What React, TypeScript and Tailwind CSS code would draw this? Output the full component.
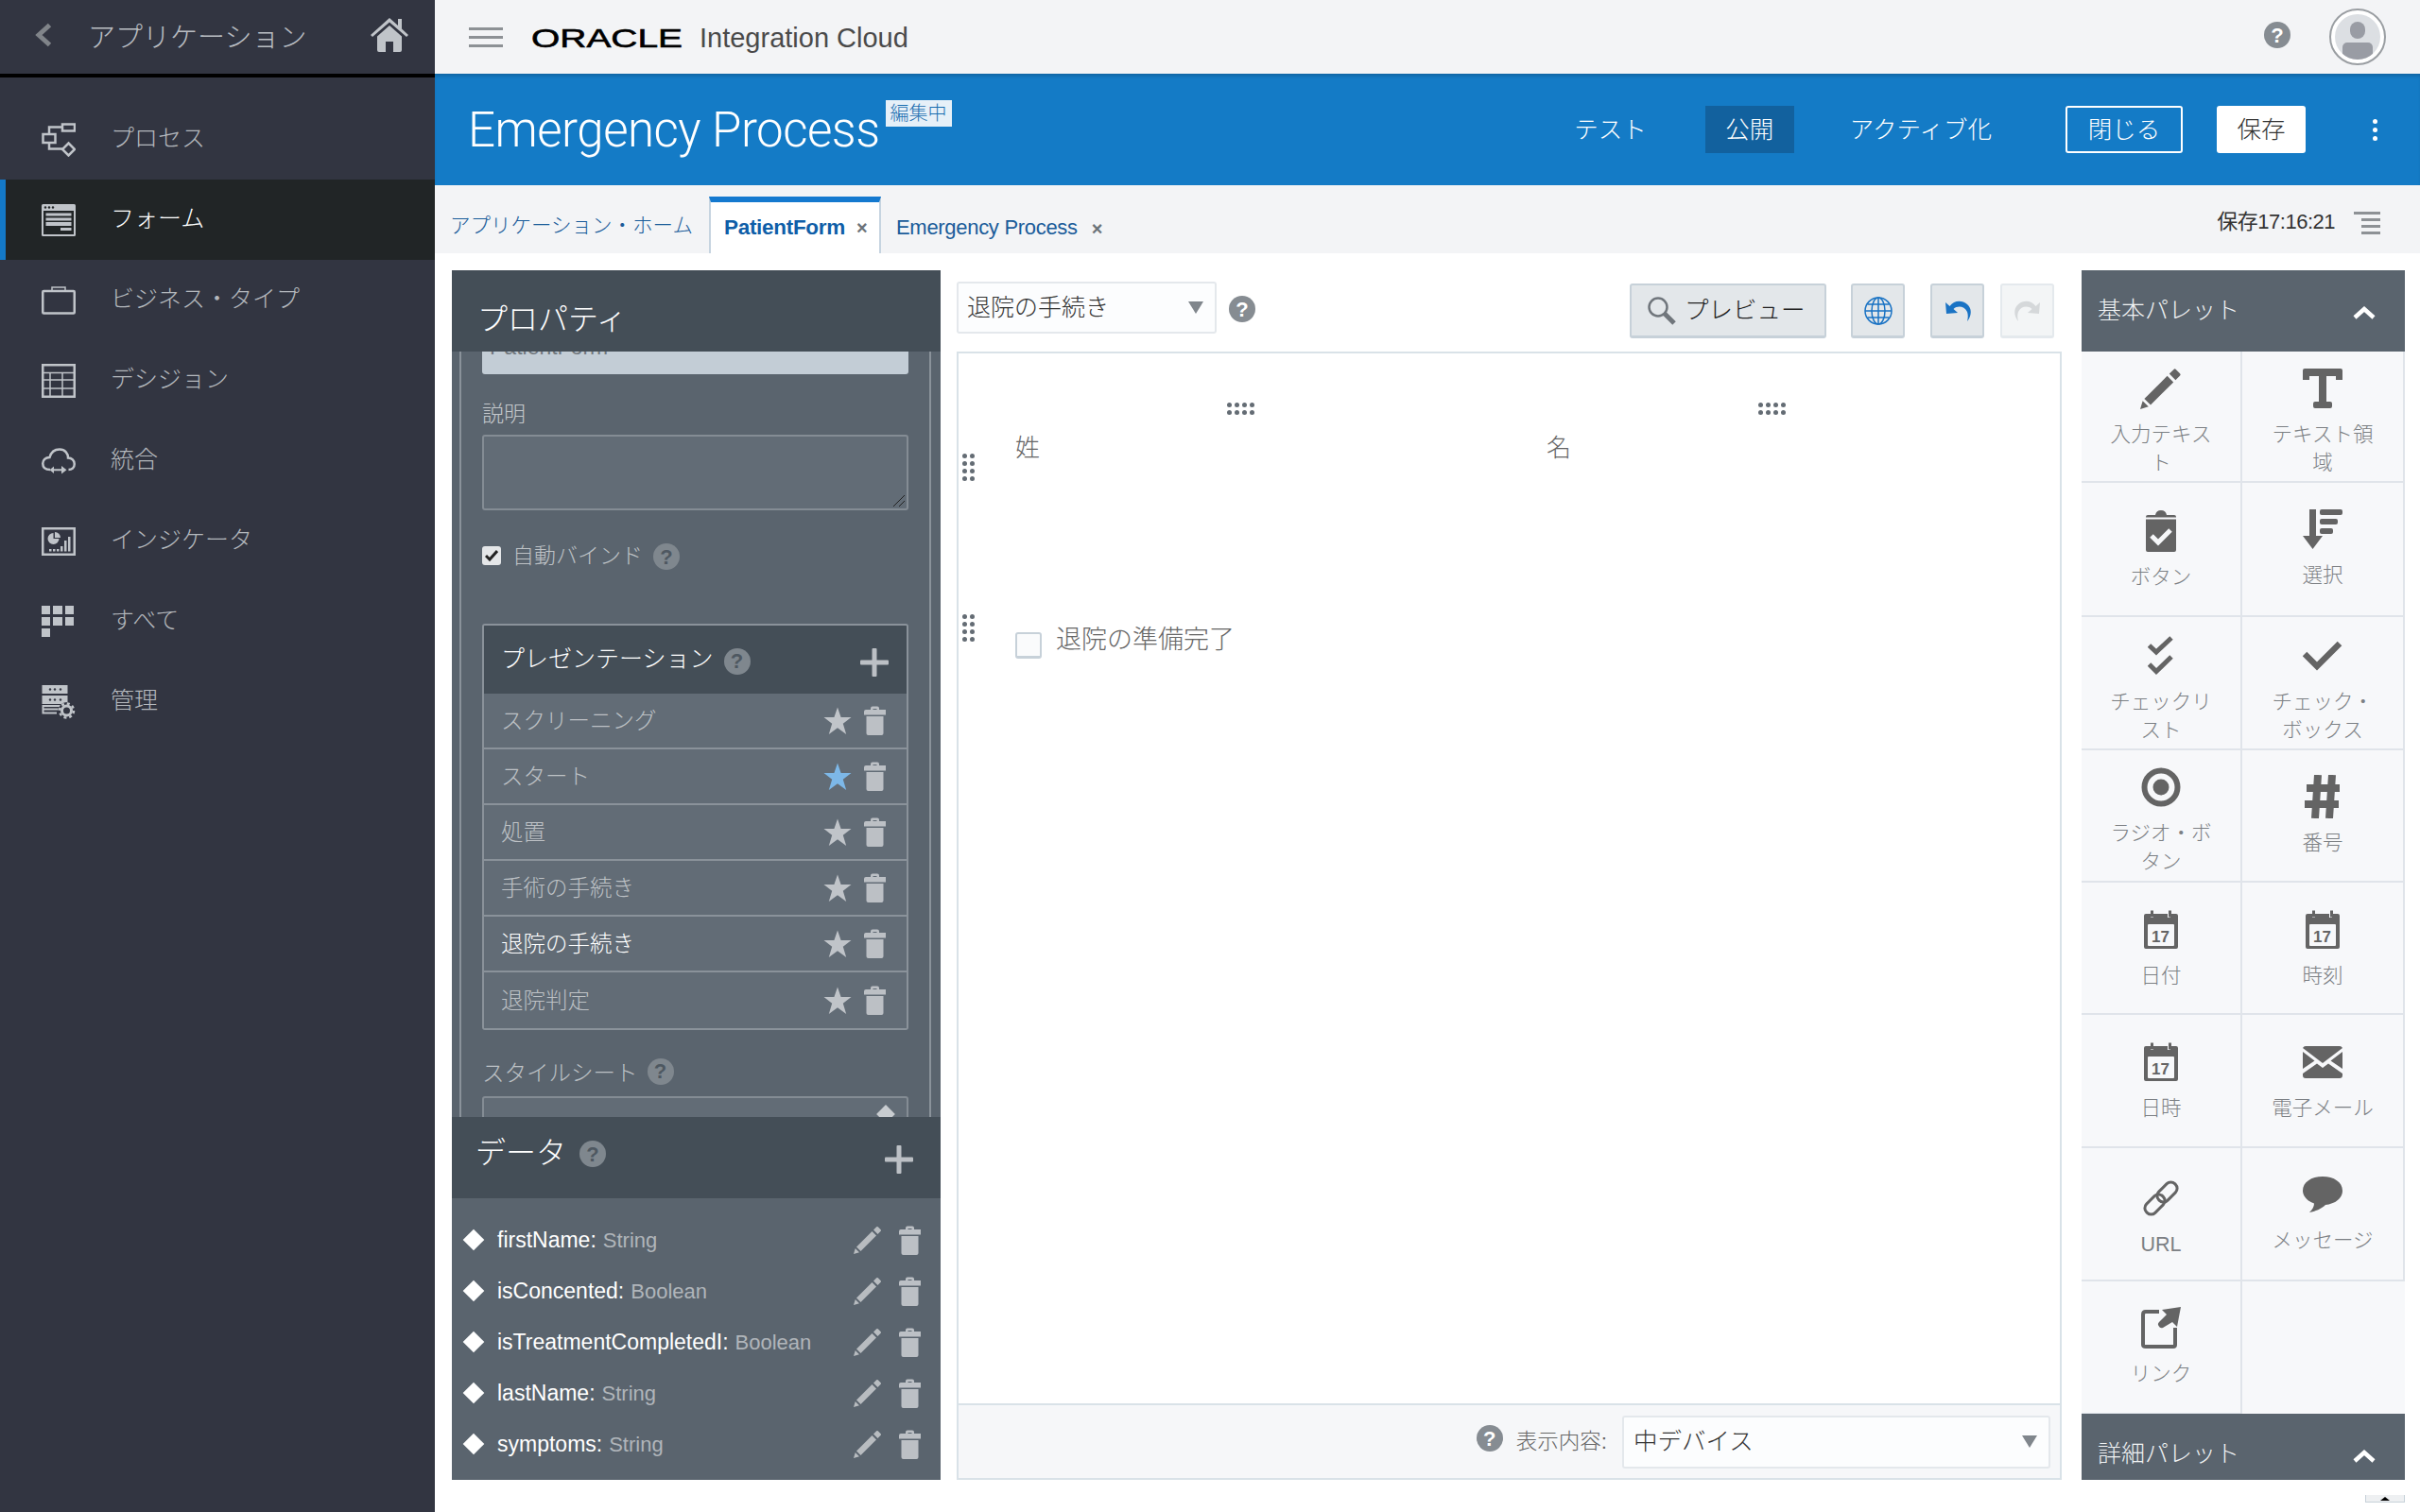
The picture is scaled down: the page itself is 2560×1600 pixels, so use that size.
import type { ReactNode } from "react";

const navItems = ["プロセス", "フォーム", "ビジネス・タイプ", "デシジョン", "統合", "インジケータ", "すべて", "管理"];

function ProcessIcon() {
  return (
    <svg width="36" height="36" viewBox="0 0 36 36" fill="none" stroke="currentColor" strokeWidth="2.5">
      <rect x="22" y="1.5" width="13" height="7" />
      <rect x="1.5" y="12" width="13" height="9" />
      <path d="M28.500 21.500 L35 28 L28.500 34.500 L22 28 Z" />
      <path d="M8 12 V4.500 H22 M8 21 V27.500 H22" />
    </svg>
  );
}

function FormIcon() {
  return (
    <svg width="36" height="34" viewBox="0 0 36 34" fill="none">
      <rect width="36" height="34" rx="1.500" fill="currentColor" />
      <rect x="2" y="7" width="32" height="25" fill="#212526" />
      <circle cx="4" cy="3.500" r="1.200" fill="#212526" />
      <circle cx="8" cy="3.500" r="1.200" fill="#212526" />
      <circle cx="12" cy="3.500" r="1.200" fill="#212526" />
      <rect x="4.500" y="9.500" width="27" height="3" fill="currentColor" />
      <rect x="4.500" y="14.500" width="27" height="3" fill="currentColor" />
      <rect x="4.500" y="19" width="27" height="4" fill="currentColor" />
      <rect x="20" y="25" width="11.500" height="3" fill="currentColor" />
    </svg>
  );
}

function BriefcaseIcon() {
  return (
    <svg width="36" height="30" viewBox="0 0 36 30" fill="none" stroke="currentColor" strokeWidth="2.5">
      <rect x="1.250" y="5" width="33.500" height="23.500" rx="1" />
      <path d="M11 5 V1 H25 V5" strokeWidth="1.500" />
    </svg>
  );
}

function TableIcon() {
  return (
    <svg width="36" height="36" viewBox="0 0 36 36" fill="none" stroke="currentColor">
      <rect x="1.250" y="1.250" width="33.500" height="33.500" strokeWidth="2.500" />
      <path d="M1 9.500 H35 M1 17 H35 M1 26 H35 M9 9.500 V35 M22 9.500 V35" strokeWidth="1.500" />
    </svg>
  );
}

function CloudIcon() {
  return (
    <svg width="36" height="28" viewBox="0 0 36 28" fill="none" stroke="currentColor" strokeWidth="2.500">
      <path d="M9 23 C3 23 1.250 19.500 1.250 16.500 C1.250 13 4 10 8.500 10 C10 4.500 14 1.500 19 1.500 C25 1.500 28 6 28 10.500 C32 10.500 34.750 13.500 34.750 17 C34.750 21 32 23 28.500 23" />
      <path d="M13 19.500 V27 L8.500 23.250 Z" fill="currentColor" stroke="none" />
      <path d="M21 19 L26.500 23.250 L21 27.500 Z" fill="currentColor" stroke="none" />
      <path d="M13 23.250 H22" strokeWidth="2" />
    </svg>
  );
}

function DashboardIcon() {
  return (
    <svg width="36" height="30" viewBox="0 0 36 30" fill="none">
      <rect x="1.250" y="1.250" width="33.500" height="27.500" stroke="currentColor" strokeWidth="2.500" />
      <path d="M12.500 6 A6 6 0 1 0 18.500 12 H12.500 Z" fill="currentColor" />
      <path d="M14 5 A6 6 0 0 1 20 11 H14 Z" fill="currentColor" />
      <g fill="currentColor">
        <rect x="8" y="23" width="2.500" height="2.500" />
        <rect x="12" y="23" width="2.500" height="2.500" />
        <rect x="16" y="23" width="2.500" height="2.500" />
        <rect x="20" y="20" width="2.500" height="5.500" />
        <rect x="24" y="14" width="2.500" height="11.500" />
        <rect x="28" y="10" width="2.500" height="15.500" />
      </g>
    </svg>
  );
}

function GridIcon() {
  return (
    <div className="grid w-[34px] grid-cols-3 gap-[3px]">
      {Array.from({ length: 7 }).map((_, i) => (
        <span key={i} className="h-[9px] w-[9.300px] bg-current" />
      ))}
    </div>
  );
}

function AdminIcon() {
  return (
    <svg width="36" height="36" viewBox="0 0 36 36" fill="none">
      <rect x="0.500" y="0" width="27" height="9" fill="currentColor" />
      <rect x="0.500" y="11" width="27" height="9" fill="currentColor" />
      <path d="M0.500 22 H24 M1.500 22 V29.500 H16" stroke="currentColor" strokeWidth="2" />
      <path d="M1.500 25.500 H20" stroke="currentColor" strokeWidth="2" />
      <g fill="#323541">
        <circle cx="9" cy="4.500" r="1.200" />
        <circle cx="14" cy="4.500" r="1.200" />
        <circle cx="20" cy="4.500" r="1.200" />
        <circle cx="9" cy="15.500" r="1.200" />
        <circle cx="14" cy="15.500" r="1.200" />
        <circle cx="20" cy="15.500" r="1.200" />
      </g>
      <circle cx="26.500" cy="27" r="9" fill="#323541" />
      <circle cx="26.500" cy="27" r="5" stroke="currentColor" strokeWidth="3" />
      <circle cx="26.500" cy="27" r="7.500" stroke="currentColor" strokeWidth="2.500" strokeDasharray="3 2.900" />
    </svg>
  );
}

const navIcons = [
  <ProcessIcon key="a" />,
  <FormIcon key="b" />,
  <BriefcaseIcon key="c" />,
  <TableIcon key="d" />,
  <CloudIcon key="e" />,
  <DashboardIcon key="f" />,
  <GridIcon key="g" />,
  <AdminIcon key="h" />,
];

function Help({ dark = false }: { dark?: boolean }) {
  return (
    <span
      className={`inline-flex h-[28px] w-[28px] shrink-0 items-center justify-center rounded-full text-[22px] font-bold ${
        dark ? "bg-[#7f878e] text-[#4e5861]" : "bg-[#868c92] text-white"
      }`}
    >
      ?
    </span>
  );
}

function Star({ className = "text-[#c0c4c9]" }: { className?: string }) {
  return (
    <svg width="30" height="30" viewBox="0 0 30 30" className={className} fill="currentColor">
      <path d="M15 0.500 L18.600 11 L29.500 11 L20.800 17.800 L24.200 29 L15 22.200 L5.800 29 L9.200 17.800 L0.500 11 L11.400 11 Z" />
    </svg>
  );
}

function Trash() {
  return (
    <svg width="23" height="31" viewBox="0 0 23 31" fill="#bcc0c5">
      <path d="M7 4 V2.500 Q7 0.500 9 0.500 H14 Q16 0.500 16 2.500 V4 H23 V9.500 H0 V6 Q0 4 2 4 Z M9.500 3 V4 H13.500 V3 Z" fillRule="evenodd" />
      <path d="M2.500 11 H20.500 V29 Q20.500 31 18.500 31 H4.500 Q2.500 31 2.500 29 Z" />
    </svg>
  );
}

function Pencil({ size = 30, className = "text-[#b8bcc0]" }: { size?: number; className?: string }) {
  return (
    <svg width={size} height={size} viewBox="0 0 30 30" fill="currentColor" className={className}>
      <path d="M0 30 L1.800 24 L6 28.200 Z" />
      <path d="M3 22.500 L19.500 6 L24 10.500 L7.500 27 Z" />
      <path d="M21 4.500 L24.200 1.300 Q25 0.500 25.800 1.300 L28.700 4.200 Q29.500 5 28.700 5.800 L25.500 9 Z" />
    </svg>
  );
}

function Plus({ className = "" }: { className?: string }) {
  return (
    <svg width="30" height="30" viewBox="0 0 30 30" fill="#bcc0c5" className={className}>
      <rect x="12.500" width="5" height="30" rx="1" />
      <rect y="12.500" width="30" height="5" rx="1" />
    </svg>
  );
}

function Chevron() {
  return (
    <svg width="24" height="14" viewBox="0 0 24 14" fill="none" stroke="white" strokeWidth="4.500" className="mt-[38px]">
      <path d="M2 12 L12 3 L22 12" />
    </svg>
  );
}

function Calendar() {
  return (
    <svg width="38" height="42" viewBox="0 0 38 42" className="text-[#646464]">
      <path d="M3 4 H8 V8 H11 V4 H26 V8 H29 V4 H35 Q37 4 37 6 V39 Q37 41 35 41 H3 Q1 41 1 39 V6 Q1 4 3 4 Z" fill="currentColor" />
      <rect x="8" y="0.500" width="3" height="7" fill="currentColor" />
      <rect x="27" y="0.500" width="3" height="7" fill="currentColor" />
      <rect x="5" y="15" width="28" height="23" rx="1" fill="#f7f8fa" />
      <text x="18.500" y="33.500" textAnchor="middle" fontFamily="Liberation Sans" fontWeight="700" fontSize="17" fill="currentColor">
        17
      </text>
    </svg>
  );
}

function PaletteIcon({ name }: { name: string }) {
  const c = "#646464";
  switch (name) {
    case "pencil":
      return <Pencil size={44} className="text-[#646464]" />;
    case "text":
      return (
        <svg width="42" height="42" viewBox="0 0 42 42" fill={c}>
          <path d="M0 2 Q0 0 2 0 H40 Q42 0 42 2 V12 H35 V8 H25 V35 H29 Q31 35 31 37 V40 Q31 42 29 42 H13 Q11 42 11 40 V37 Q11 35 13 35 H17 V8 H7 V12 H0 Z" />
        </svg>
      );
    case "clip":
      return (
        <svg width="32" height="44" viewBox="0 0 32 44">
          <path d="M2 5 H10 Q11 0 16 0 Q21 0 22 5 H30 Q32 5 32 7 V42 Q32 44 30 44 H2 Q0 44 0 42 V7 Q0 5 2 5 Z" fill={c} />
          <rect x="0" y="7.500" width="32" height="2" fill="#f7f8fa" />
          <path d="M6 27 L13 34 L26 21" stroke="#f7f8fa" strokeWidth="5" fill="none" />
        </svg>
      );
    case "sort":
      return (
        <svg width="42" height="42" viewBox="0 0 42 42" fill={c}>
          <rect x="7" y="0" width="7" height="28" />
          <path d="M0 28 H21 L10.500 42 Z" />
          <rect x="18" y="0" width="24" height="6" rx="2" />
          <rect x="18" y="10" width="19" height="6" rx="2" />
          <rect x="18" y="20" width="14" height="6" rx="2" />
        </svg>
      );
    case "checks":
      return (
        <svg width="28" height="44" viewBox="0 0 28 44" fill="none" stroke={c} strokeWidth="5">
          <path d="M1.500 11 L9 18 L25 3" />
          <path d="M1.500 31 L9 38.500 L25 23" />
        </svg>
      );
    case "check":
      return (
        <svg width="42" height="32" viewBox="0 0 42 32" fill="none" stroke={c} strokeWidth="6.500">
          <path d="M2 14 L15 27 L39 3" />
        </svg>
      );
    case "radio":
      return (
        <svg width="42" height="42" viewBox="0 0 42 42">
          <circle cx="21" cy="21" r="17.500" fill="none" stroke={c} strokeWidth="6" />
          <circle cx="21" cy="21" r="8.500" fill={c} />
        </svg>
      );
    case "hash":
      return (
        <svg width="38" height="46" viewBox="0 0 38 46" fill="none" stroke={c} strokeWidth="8">
          <path d="M14 0 L11 46 M29 0 L26 46 M2 14 H37 M0 31 H36" />
        </svg>
      );
    case "calendar":
      return <Calendar />;
    case "mail":
      return (
        <svg width="42" height="34" viewBox="0 0 42 34" fill={c}>
          <path d="M3 0 H39 Q41 0 42 2 L21 18 L0 2 Q1 0 3 0 Z" />
          <path d="M0 6 L12.500 15.500 L0 24 Z M42 6 L29.500 15.500 L42 24 Z" />
          <path d="M0 29 L15 18.500 L21 23 L27 18.500 L42 29 V31 Q42 34 39 34 H3 Q0 34 0 31 Z" />
        </svg>
      );
    case "link":
      return (
        <svg width="44" height="44" viewBox="0 0 44 44" fill="none" stroke={c} strokeWidth="3">
          <rect x="16.500" y="9" width="24" height="13" rx="6" transform="rotate(-45 28.500 15.500)" />
          <rect x="3.500" y="22" width="24" height="13" rx="6" transform="rotate(-45 15.500 28.500)" />
        </svg>
      );
    case "bubble":
      return (
        <svg width="42" height="38" viewBox="0 0 42 38" fill={c}>
          <path d="M21 0 C33 0 42 6 42 15 C42 24 33 29 24 30 C20 34 13 37 7 38 C10 35 12 32 12 28.500 C5 26 0 21 0 15 C0 6 9 0 21 0 Z" />
        </svg>
      );
    case "share":
      return (
        <svg width="42" height="44" viewBox="0 0 42 44" fill="none">
          <path d="M19 5 H5 Q2 5 2 8 V40 Q2 42 5 42 H34 Q36 42 36 40 V22" stroke={c} strokeWidth="4" />
          <path d="M42 0 L38 21 L33 16 L23 22 Q20 23 18.500 20 Q17 18 19 16 L27 8 L22 3 Z" fill={c} />
        </svg>
      );
    default:
      return null;
  }
}

const palette = [
  { icon: "pencil", label: "入力テキスト", pt: "pt-[14px]", h: "h-[139px]" },
  { icon: "text", label: "テキスト領域", pt: "pt-[14px]", h: "h-[139px]" },
  { icon: "clip", label: "ボタン", pt: "pt-[26px]", h: "h-[142px]" },
  { icon: "sort", label: "選択", pt: "pt-[24px]", h: "h-[142px]" },
  { icon: "checks", label: "チェックリスト", pt: "pt-[16px]", h: "h-[141px]" },
  { icon: "check", label: "チェック・ボックス", pt: "pt-[16px]", h: "h-[141px]" },
  { icon: "radio", label: "ラジオ・ボタン", pt: "pt-[14px]", h: "h-[140px]" },
  { icon: "hash", label: "番号", pt: "pt-[24px]", h: "h-[140px]" },
  { icon: "calendar", label: "日付", pt: "pt-[25px]", h: "h-[140px]" },
  { icon: "calendar", label: "時刻", pt: "pt-[25px]", h: "h-[140px]" },
  { icon: "calendar", label: "日時", pt: "pt-[25px]", h: "h-[141px]" },
  { icon: "mail", label: "電子メール", pt: "pt-[25px]", h: "h-[141px]" },
  { icon: "link", label: "URL", pt: "pt-[28px]", h: "h-[141px]" },
  { icon: "bubble", label: "メッセージ", pt: "pt-[24px]", h: "h-[141px]" },
  { icon: "share", label: "リンク", pt: "pt-[24px]", h: "h-[141px]" },
];

const presentations = ["スクリーニング", "スタート", "処置", "手術の手続き", "退院の手続き", "退院判定"];

const dataRows = [
  ["firstName:", "String"],
  ["isConcented:", "Boolean"],
  ["isTreatmentCompletedI:", "Boolean"],
  ["lastName:", "String"],
  ["symptoms:", "String"],
];

function DragDots({ vertical = false }: { vertical?: boolean }) {
  return (
    <div className={`grid gap-[3px] ${vertical ? "grid-cols-2" : "grid-cols-4"}`}>
      {Array.from({ length: 8 }).map((_, i) => (
        <span key={i} className="h-[5px] w-[5px] rounded-full bg-[#646c74]" />
      ))}
    </div>
  );
}

function ToolButton({ children, faded = false }: { children: ReactNode; faded?: boolean }) {
  return (
    <button
      className={`flex h-[58px] w-[57px] items-center justify-center rounded-[3px] border-2 border-b-[3px] ${
        faded ? "border-[#e4e9ed] bg-[#f3f5f6]" : "border-[#c7d1d9] bg-[#e3e7ea]"
      }`}
    >
      {children}
    </button>
  );
}

function UndoIcon({ color }: { color: string }) {
  return (
    <svg width="30" height="26" viewBox="0 0 30 26" fill={color}>
      <path d="M2 4 L3 16 L15 15 L10.500 11 C15 7 22 8 25 14 C26 17 26 20 25 24 C30 18 30 10 25 6 C19 1 11 2 6.500 8 Z" />
    </svg>
  );
}

function SelectArrow() {
  return <span className="h-0 w-0 border-x-[8px] border-t-[13px] border-x-transparent border-t-[#80868c]" />;
}

function Sidebar() {
  return (
    <aside className="flex w-[460px] shrink-0 flex-col bg-[#323541]">
      <div className="flex h-[82px] shrink-0 items-center border-b-4 border-black pl-[37px] pr-[28px]">
        <svg width="18" height="26" viewBox="0 0 18 26" fill="none" stroke="#808489" strokeWidth="5" className="-mt-[4px]">
          <path d="M15.500 2.500 L4 13 L15.500 23.500" />
        </svg>
        <span className="ml-[38px] mt-[3px] text-[29px] font-light text-[#b9bdc2]">アプリケーション</span>
        <svg width="40" height="36" viewBox="0 0 40 36" fill="#c0c4c9" className="ml-auto -mt-[4px]">
          <path d="M20 0 L29 8 V1 H33 V11.500 L40 18 L38 20 L20 4.500 L2 20 L0 18 Z" />
          <path d="M7 19.500 L20 8 L33 19.500 V34 Q33 36 31 36 H24 V25 H16 V36 H9 Q7 36 7 34 Z" />
        </svg>
      </div>
      <nav className="flex flex-col pt-[23px]">
        {navItems.map((label, i) => (
          <div
            key={label}
            className={`flex h-[85px] items-center text-[25px] font-light ${
              i === 1
                ? "border-l-[6px] border-[#1479c7] bg-[#212526] pl-[38px] text-white"
                : "pl-[44px] text-[#b4b8bd]"
            }`}
          >
            <span className="flex w-[73px] shrink-0 items-center text-[#c0c4c9]">{navIcons[i]}</span>
            <span className="-mt-[2px]">{label}</span>
          </div>
        ))}
      </nav>
    </aside>
  );
}

function TopBars() {
  return (
    <>
      <header className="flex h-[78px] shrink-0 items-center bg-[#f3f4f6] pl-[36px] pr-[36px]">
        <div className="flex w-[36px] flex-col gap-[6px]">
          <span className="h-[3px] bg-[#8d9195]" />
          <span className="h-[3px] bg-[#8d9195]" />
          <span className="h-[3px] bg-[#8d9195]" />
        </div>
        <div className="ml-[30px] mt-[3px] flex w-[178px] items-start">
          <span className="origin-left scale-x-[1.39] text-[28px] leading-none text-black [-webkit-text-stroke:0.6px_black]">
            ORACLE
          </span>
        </div>
        <span className="mt-[3px] text-[29px] text-[#4a4a4a]">Integration Cloud</span>
        <div className="ml-auto mr-[41px] -mt-[3px]">
          <Help />
        </div>
        <div className="flex h-[60px] w-[60px] items-center justify-center rounded-full border-2 border-[#9a9ea2] bg-white">
          <div className="relative h-[48px] w-[48px] overflow-hidden rounded-full bg-[#dcdfe3]">
            <span className="absolute left-[16px] top-[8px] h-[18px] w-[16px] rounded-full bg-[#999ca4]" />
            <span className="absolute left-[8px] top-[30px] h-[20px] w-[32px] rounded-t-[5px] bg-[#999ca4]" />
          </div>
        </div>
      </header>

      <div className="flex h-[118px] shrink-0 items-center bg-[#147bc6] pl-[35px] pr-[45px] shadow-[inset_0_4px_4px_-2px_rgba(0,0,0,0.2)]">
        <h1 className="mt-[3px] text-[51px] font-light tracking-[-0.5px] text-white font-['Roboto',sans-serif]">
          Emergency Process
        </h1>
        <span className="-mt-[34px] ml-[6px] bg-[#e6f0f8] px-[5px] text-[20px] font-light leading-[28px] text-[#1a6eb0]">
          編集中
        </span>
        <div className="ml-auto flex items-center text-[25.500px] font-light text-white">
          <span className="mr-[62px]">テスト</span>
          <span className="mr-[59px] flex h-[50px] w-[94px] items-center justify-center bg-[#12619e]">公開</span>
          <span className="mr-[78px]">アクティブ化</span>
          <span className="mr-[36px] flex h-[50px] w-[124px] items-center justify-center rounded-[3px] border-2 border-white">
            閉じる
          </span>
          <span className="mr-[71px] flex h-[50px] w-[94px] items-center justify-center rounded-[3px] bg-white text-[#333]">
            保存
          </span>
          <span className="flex flex-col gap-[4px]">
            <span className="h-[5px] w-[5px] rounded-full bg-white" />
            <span className="h-[5px] w-[5px] rounded-full bg-white" />
            <span className="h-[5px] w-[5px] rounded-full bg-white" />
          </span>
        </div>
      </div>

      <div className="flex h-[72px] shrink-0 items-end bg-[#f3f4f6] pl-[16px] pr-[42px] text-[22px]">
        <span className="mb-[13px] w-[274px] text-[21.500px] font-light text-[#1a5c9a]">アプリケーション・ホーム</span>
        <div className="flex h-[60px] w-[182px] items-center border-x-2 border-t-[6px] border-x-[#c6d4e0] border-t-[#1479cf] bg-white pl-[14px]">
          <span className="text-[22.500px] font-bold tracking-[-0.3px] text-[#0f5ea8]">PatientForm</span>
          <span className="ml-[12px] text-[20px] font-bold text-[#6c7379]">×</span>
        </div>
        <span className="mb-[11px] ml-[16px] tracking-[-0.3px] text-[#1a5c9a]">Emergency Process</span>
        <span className="mb-[11px] ml-[15px] text-[20px] font-bold text-[#6c7379]">×</span>
        <span className="mb-[17px] ml-auto text-[22px] tracking-[-0.5px] text-[#333]">保存17:16:21</span>
        <div className="mb-[20px] ml-[20px] flex w-[28px] flex-col items-end gap-[4px]">
          <span className="h-[3px] w-[28px] bg-[#8d9195]" />
          <span className="h-[3px] w-[20px] bg-[#8d9195]" />
          <span className="h-[3px] w-[20px] bg-[#8d9195]" />
          <span className="h-[3px] w-[20px] bg-[#8d9195]" />
        </div>
      </div>
    </>
  );
}

function LeftPanel() {
  return (
    <section className="flex w-[517px] shrink-0 flex-col bg-[#5a646e]">
      <div className="flex h-[86px] shrink-0 items-end bg-[#444e57] pb-[14px] pl-[27px]">
        <h2 className="text-[32px] font-light leading-[40px] text-white">プロパティ</h2>
      </div>

      <div className="h-[810px] shrink-0 overflow-hidden">
        <div className="ml-[8px] mr-[10px] h-[900px] border-x-2 border-[#8a929a] px-[22px]">
          <div className="-mt-[30px] flex h-[54px] items-end rounded-[3px] bg-[#c3cdd6] px-[8px] pb-[12px] text-[23px] text-[#70777d]">
            PatientForm
          </div>
          <label className="mt-[27px] block text-[23px] font-light leading-[30px] text-[#c4c8cc]">説明</label>
          <div className="relative mt-[7px] h-[80px] rounded-[3px] border-2 border-[#848c94] bg-[#626c76]">
            <svg width="14" height="14" viewBox="0 0 14 14" className="absolute bottom-[1px] right-[1px]" stroke="#222" fill="none">
              <path d="M1 13 L13 1 M7 13 L13 7" />
            </svg>
          </div>
          <div className="mt-[33px] flex h-[30px] items-center text-[23px] font-light text-[#bdc1c5]">
            <span className="flex h-[20px] w-[20px] items-center justify-center rounded-[3px] bg-[#e4e6e8]">
              <svg width="14" height="12" viewBox="0 0 14 12" fill="none" stroke="#222" strokeWidth="3">
                <path d="M1 6 L5 10 L13 1" />
              </svg>
            </span>
            <span className="ml-[12px]">自動バインド</span>
            <span className="ml-[11px] mt-[2px]">
              <Help dark />
            </span>
          </div>

          <div className="mt-[57px] overflow-hidden rounded-[3px] border-2 border-[#8a929a]">
            <div className="flex h-[72px] items-center bg-[#444e57] pl-[18px] pr-[19px]">
              <span className="text-[25px] font-light text-white">プレゼンテーション</span>
              <span className="ml-[11px] mt-[4px]">
                <Help dark />
              </span>
              <Plus className="ml-auto mt-[6px]" />
            </div>
            {presentations.map((p, i) => (
              <div
                key={p}
                className={`flex h-[59px] items-center bg-[#626c76] pl-[18px] pr-[22px] text-[23.500px] font-light ${
                  i < presentations.length - 1 ? "border-b-2 border-[#8a929a]" : ""
                } ${i === 4 ? "text-white" : "text-[#bdc1c5]"}`}
              >
                <span className="mt-[2px]">{p}</span>
                <Star className={`ml-auto ${i === 1 ? "text-[#7db8e8]" : "text-[#c0c4c9]"}`} />
                <span className="ml-[13px]">
                  <Trash />
                </span>
              </div>
            ))}
          </div>

          <div className="mt-[32px] flex h-[30px] items-center text-[23.500px] font-light text-[#bdc1c5]">
            <span>スタイルシート</span>
            <span className="-mt-[6px] ml-[10px]">
              <Help dark />
            </span>
          </div>
          <div className="relative mt-[8px] h-[100px] rounded-[3px] border-2 border-[#848c94] bg-[#626c76]">
            <span className="absolute right-[15px] top-[10px] h-[14px] w-[14px] rotate-45 bg-[#c8ccd0]" />
          </div>
        </div>
      </div>

      <div className="flex h-[86px] shrink-0 items-start bg-[#444e57] pl-[25px] pr-[29px]">
        <h2 className="mt-[18px] text-[32px] font-light leading-[40px] text-white">データ</h2>
        <span className="ml-[14px] mt-[25px]">
          <Help dark />
        </span>
        <Plus className="ml-auto mt-[30px]" />
      </div>
      <div className="flex flex-col pt-[17px]">
        {dataRows.map(([name, type]) => (
          <div key={name} className="flex h-[54px] items-center pl-[15px] pr-[21px]">
            <span className="h-[16px] w-[16px] rotate-45 bg-white" />
            <span className="ml-[17px] text-[23px] text-white">{name}</span>
            <span className="ml-[7px] text-[22px] text-[#b0b5ba]">{type}</span>
            <span className="ml-auto">
              <Pencil />
            </span>
            <span className="ml-[18px]">
              <Trash />
            </span>
          </div>
        ))}
      </div>
    </section>
  );
}

function CenterPanel() {
  return (
    <section className="flex w-[1169px] shrink-0 flex-col">
      <div className="flex h-[86px] shrink-0 items-start pr-[8px]">
        <div className="mt-[12px] flex h-[55px] w-[275px] items-center justify-between rounded-[3px] border-2 border-[#e4e8ec] bg-[#fcfdfe] pl-[9px] pr-[12px] text-[25px] font-light text-[#333]">
          <span>退院の手続き</span>
          <SelectArrow />
        </div>
        <span className="ml-[13px] mt-[27px]">
          <Help />
        </span>
        <button className="ml-auto mt-[14px] flex h-[58px] w-[208px] items-center rounded-[3px] border-2 border-b-[3px] border-[#c7d1d9] bg-[#e3e7ea] pl-[16px] text-[25.500px] font-light text-[#222]">
          <svg width="32" height="32" viewBox="0 0 32 32" fill="none" stroke="#70767c">
            <circle cx="12" cy="12" r="9.500" strokeWidth="2.500" />
            <path d="M19 19 L29 29" strokeWidth="5" />
          </svg>
          <span className="ml-[8px]">プレビュー</span>
        </button>
        <div className="ml-[26px] mt-[14px]">
          <ToolButton>
            <svg width="32" height="32" viewBox="0 0 32 32" fill="none" stroke="#1a73c4" strokeWidth="1.500">
              <circle cx="16" cy="16" r="14" />
              <ellipse cx="16" cy="16" rx="7" ry="14" />
              <path d="M16 2 V30 M2 16 H30 M4.500 9 H27.500 M4.500 23 H27.500" />
            </svg>
          </ToolButton>
        </div>
        <div className="ml-[27px] mt-[14px]">
          <ToolButton>
            <UndoIcon color="#1a73c4" />
          </ToolButton>
        </div>
        <div className="ml-[17px] mt-[14px]">
          <ToolButton faded>
            <span className="-scale-x-100">
              <UndoIcon color="#d5d8da" />
            </span>
          </ToolButton>
        </div>
      </div>

      <div className="flex min-h-0 flex-1 flex-col border-2 border-[#d9e2e8]">
        <div className="relative flex-1">
          <div className="absolute left-[284px] top-[52px]">
            <DragDots />
          </div>
          <div className="absolute left-[846px] top-[52px]">
            <DragDots />
          </div>
          <div className="absolute left-[4px] top-[106px]">
            <DragDots vertical />
          </div>
          <div className="absolute left-[4px] top-[276px]">
            <DragDots vertical />
          </div>
          <div className="flex pl-[60px] pt-[82px] text-[26px] font-light leading-[36px] text-[#666]">
            <span className="w-[562px]">姓</span>
            <span>名</span>
          </div>
          <div className="mt-[165px] flex items-start pl-[60px] text-[27px] font-light leading-[40px] text-[#666]">
            <span className="mt-[12px] h-[28px] w-[28px] rounded-[3px] border-2 border-b-[3px] border-[#c7d1d9] bg-[#fafbfc]" />
            <span className="ml-[15px]">退院の準備完了</span>
          </div>
        </div>
        <div className="flex h-[79px] shrink-0 items-center border-t-2 border-[#d9e2e8] bg-[#f6f7f9] pr-[10px]">
          <span className="ml-auto -mt-[6px]">
            <Help />
          </span>
          <span className="ml-[14px] text-[22.500px] font-light text-[#666]">表示内容:</span>
          <div className="ml-[16px] flex h-[56px] w-[453px] items-center justify-between rounded-[3px] border-2 border-[#e4e8ec] bg-[#fcfdfe] pl-[10px] pr-[12px] text-[25.500px] font-light text-[#333]">
            <span>中デバイス</span>
            <SelectArrow />
          </div>
        </div>
      </div>
    </section>
  );
}

function PaletteHeader({ label, h }: { label: string; h: string }) {
  return (
    <div className={`flex shrink-0 items-start justify-between overflow-hidden bg-[#5a646e] pl-[17px] pr-[31px] text-[25px] font-light text-[#f0f2f3] ${h}`}>
      <span className="mt-[27px] leading-[30px]">{label}</span>
      <Chevron />
    </div>
  );
}

function RightPanel() {
  return (
    <section className="flex w-[342px] shrink-0 flex-col overflow-hidden">
      <PaletteHeader label="基本パレット" h="h-[86px]" />
      <div className="grid flex-1 grid-cols-[170px_172px] content-start overflow-hidden bg-[#f7f8fa]">
        {palette.map((p) => (
          <div
            key={p.icon + p.label}
            className={`flex flex-col items-center border-b-2 border-r-2 border-[#e0e4ea] ${p.pt} ${p.h}`}
          >
            <div className="flex h-[50px] items-center justify-center">
              <PaletteIcon name={p.icon} />
            </div>
            <div className="mt-[9px] w-[116px] text-center text-[21.500px] font-light leading-[30px] text-[#7c8084]">
              {p.label}
            </div>
          </div>
        ))}
      </div>
      <PaletteHeader label="詳細パレット" h="h-[70px]" />
    </section>
  );
}

export default function App() {
  return (
    <div className="relative flex h-[1600px] w-[2560px] overflow-hidden bg-white font-['Liberation_Sans','Noto_Sans_CJK_JP',sans-serif]">
      <Sidebar />
      <main className="flex min-w-0 flex-1 flex-col">
        <TopBars />
        <div className="flex h-[1298px] gap-[17px] pl-[18px] pt-[18px]">
          <LeftPanel />
          <CenterPanel />
          <div className="ml-[4px] flex">
            <RightPanel />
          </div>
        </div>
      </main>
      <div className="absolute bottom-[10px] right-[16px] flex h-[8px] w-[42px] items-center justify-center border-x border-b border-[#c7d1d9] bg-[#eef0f2]">
        <span className="h-0 w-0 border-x-[5px] border-b-[4px] border-x-transparent border-b-black" />
      </div>
    </div>
  );
}
